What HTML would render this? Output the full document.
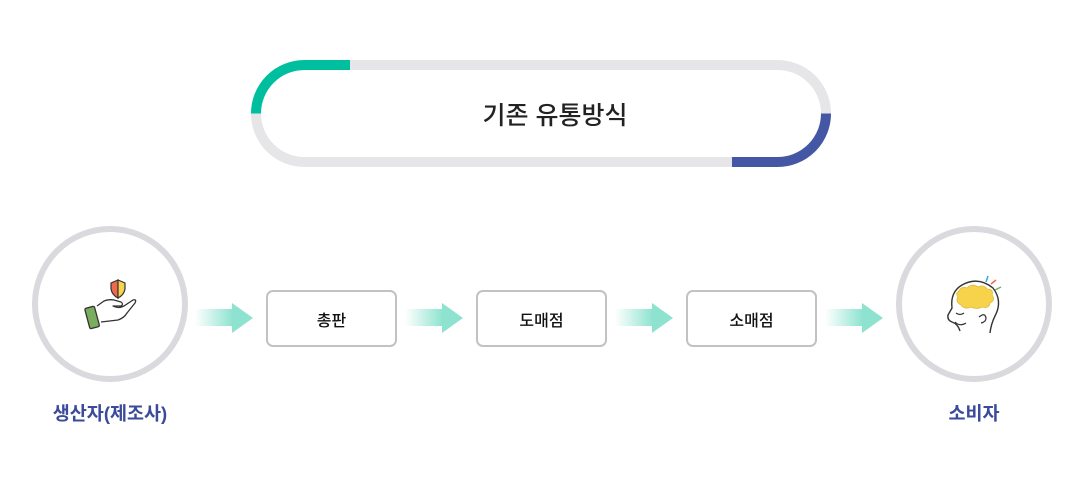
<!DOCTYPE html>
<html><head><meta charset="utf-8"><style>
body{margin:0;width:1084px;height:480px;background:#fff;position:relative;overflow:hidden;font-family:"Liberation Sans","Noto Sans CJK KR",sans-serif}
.t{position:absolute;white-space:nowrap}
.box{position:absolute;top:290px;width:127px;height:53px;border:2px solid #c2c2c2;border-radius:7px;display:flex;align-items:center;justify-content:center;font-size:16px;font-weight:500;color:#111}
</style></head><body>
<svg width="1084" height="480" style="position:absolute;left:0;top:0">
<defs><linearGradient id="g" x1="0" x2="1"><stop offset="0" stop-color="#8ee3d0" stop-opacity="0"/><stop offset="1" stop-color="#8ee3d0"/></linearGradient></defs>
<rect x="256" y="65" width="570" height="97" rx="48.5" fill="none" stroke="#e6e6e8" stroke-width="10"/>
<path d="M256 113.5 A48.5 48.5 0 0 1 304.5 65 L350 65" fill="none" stroke="#00bf9f" stroke-width="10"/>
<path d="M826 113.5 A48.5 48.5 0 0 1 777.5 162 L732 162" fill="none" stroke="#4457a5" stroke-width="10"/>
<circle cx="110" cy="304" r="75" fill="#fff" stroke="#dadade" stroke-width="6"/>
<circle cx="974" cy="304" r="75" fill="#fff" stroke="#dadade" stroke-width="6"/>
<g id="a"><rect x="195" y="309" width="38" height="17" fill="url(#g)"/><path d="M232 303 L253 318 L232 333Z" fill="#8ee3d0"/></g>
<use href="#a" x="210"/><use href="#a" x="420"/><use href="#a" x="630"/>
<path d="M118 280 L111 283 L111 289 Q112 295 118 298 Z" fill="#ee6a4f" stroke="#333" stroke-width="1.2"/>
<path d="M118 280 L125 283 L125 289 Q124 295 118 298 Z" fill="#f6d44e" stroke="#333" stroke-width="1.2"/>
<path d="M97 306 L104 301 Q108 299 114 300 L121 302 Q124 304 121 306 L113 306 Q118 309 124 306 L133 300 Q137 299 135 303 L127 313 Q124 318 118 320 L101 322" fill="#fff" stroke="#333" stroke-width="1.3" stroke-linejoin="round"/>
<rect x="87" y="307" width="10" height="21" rx="1.5" transform="rotate(-15 92 317)" fill="#7aad5e" stroke="#333" stroke-width="1.3"/>
<path d="M960 331 Q958 324 952 322 Q947 320 948 315 L952 308 Q950 292 962 285 Q978 276 993 288 Q1003 301 995 316 Q991 324 990 333" fill="#fff" stroke="#333" stroke-width="1.4" stroke-linejoin="round"/>
<path d="M959 291 Q961 286 967 288 Q972 283 978 287 Q984 284 987 289 Q994 289 992 295 Q996 300 990 303 Q989 309 982 307 Q977 310 971 307 Q965 310 961 305 Q955 302 958 297 Q955 293 959 291Z" fill="#f7d34c" stroke="#e2b93a" stroke-width="0.8"/>
<path d="M956 313 Q960 316 964 313" fill="none" stroke="#333" stroke-width="1.2"/>
<path d="M955 322 Q960 327 966 323" fill="none" stroke="#333" stroke-width="1.2"/>
<path d="M979 317 Q985 312 986 318 Q986 322 981 323" fill="none" stroke="#333" stroke-width="1.2"/>
<path d="M986 282 L988 276" stroke="#3ea3e3" stroke-width="1.5"/>
<path d="M991 284 L996 280" stroke="#ee6a4f" stroke-width="1.5"/>
<path d="M995 290 L1001 287" stroke="#7aad5e" stroke-width="1.5"/>
</svg>
<div class="t" style="left:455px;width:200px;text-align:center;top:96px;font-size:25px;font-weight:500;color:#222">기존 유통방식</div>
<div class="box" style="left:266px">총판</div>
<div class="box" style="left:476px">도매점</div>
<div class="box" style="left:686px">소매점</div>
<div class="t" style="left:10px;width:200px;text-align:center;top:400px;font-size:18.5px;font-weight:bold;color:#3b4a9a">생산자(제조사)</div>
<div class="t" style="left:874px;width:200px;text-align:center;top:400px;font-size:18.5px;font-weight:bold;color:#3b4a9a">소비자</div>
</body></html>
